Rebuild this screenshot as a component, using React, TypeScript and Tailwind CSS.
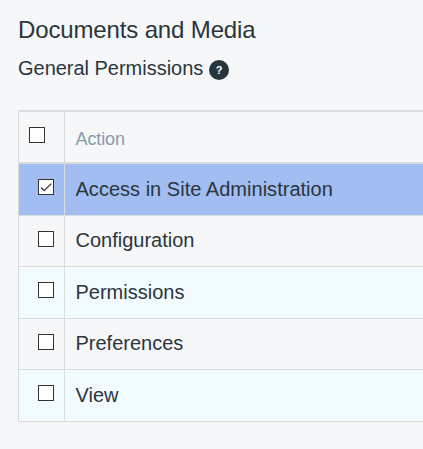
const rows = [
  { name: 'Access in Site Administration', checked: true, style: 'h-[52px] bg-[#a1bdf1]', text: 'pt-[13px] tracking-[0.02px]' },
  { name: 'Configuration', checked: false, style: 'h-[51px] bg-[#f6f7f9]', text: 'pt-3' },
  { name: 'Permissions', checked: false, style: 'h-[52px] bg-[#f2fbff]', text: 'pt-[13px]' },
  { name: 'Preferences', checked: false, style: 'h-[51px] bg-[#f6f7f9]', text: 'pt-3' },
  { name: 'View', checked: false, style: 'h-[52px] bg-[#f2fbff]', text: 'pt-[13px]' },
];

function Checkbox({ checked = false }: { checked?: boolean }) {
  return (
    <span role="checkbox" aria-checked={checked} className="block size-4 shrink-0 border border-[#333] bg-white">
      {checked && (
        <svg viewBox="0 0 14 14" className="block size-3.5" fill="none" stroke="#333" strokeWidth="1.3">
          <path d="M2 7.5L5.2 10.7L12.3 3.6" />
        </svg>
      )}
    </span>
  );
}

export default function App() {
  return (
    <main className="h-[449px] w-[423px] overflow-hidden bg-[#f6f7f9] pl-[18px] pt-[14px] font-['Liberation_Sans',Arial,sans-serif] text-[#2b353c]">
      <h1 className="h-8 whitespace-nowrap text-2xl leading-8 tracking-[-0.14px]">Documents and Media</h1>
      <div className="mt-[10px] flex h-6 items-center">
        <h2 className="w-[185px] whitespace-nowrap text-xl leading-6 tracking-[-0.02px]">General Permissions</h2>
        <span className="ml-1.5 mt-1 flex size-5 items-center justify-center rounded-full bg-[#27353d]">
          <span className="text-[11px] font-bold leading-3 text-white">?</span>
        </span>
      </div>
      <div className="mt-[30px] border-l border-t-2 border-[#d9dbdc]">
        <div className="flex h-[52px] border-b-2 border-[#d9dbdc]">
          <div className="w-[46px] border-r border-[#d9dbdc] pl-[10px] pt-[15px]"><Checkbox /></div>
          <div className="pl-[10.5px] pt-[15px] text-lg leading-6 tracking-[-0.12px] text-[#869cad]">Action</div>
        </div>
        {rows.map((row) => (
          <div key={row.name} className={`flex border-b border-[#d9dbdc] ${row.style}`}>
            <div className="w-[46px] border-r border-[#d9dbdc] pl-[19px] pt-[15px]"><Checkbox checked={row.checked} /></div>
            <div className={`whitespace-nowrap pl-[10.5px] text-xl leading-6 ${row.text}`}>{row.name}</div>
          </div>
        ))}
      </div>
    </main>
  );
}
